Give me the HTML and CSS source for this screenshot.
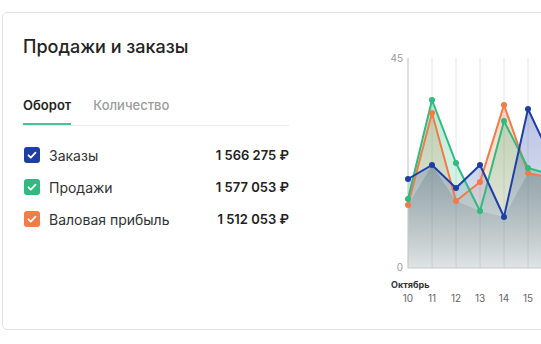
FILE: index.html
```html
<!DOCTYPE html>
<html lang="ru">
<head>
  <meta charset="UTF-8">
  <meta name="viewport" content="width=device-width, initial-scale=1.0">
  <title>Продажи и заказы</title>
  <link rel="stylesheet" href="styles.css">
</head>
<body>
  <div class="card">
    <div class="summary">
      <h2 class="title">Продажи и заказы</h2>

      <div class="tabs">
        <span class="tab active">Оборот</span>
        <span class="tab">Количество</span>
      </div>

      <ul class="legend">
        <li class="legend-row">
          <span class="check blue"><svg viewBox="0 0 16 16"><path d="M4.5 8.3l2.3 2.3 4.7-5"/></svg></span>
          <span class="legend-name">Заказы</span>
          <span class="legend-value">1 566 275 ₽</span>
        </li>
        <li class="legend-row">
          <span class="check green"><svg viewBox="0 0 16 16"><path d="M4.5 8.3l2.3 2.3 4.7-5"/></svg></span>
          <span class="legend-name">Продажи</span>
          <span class="legend-value">1 577 053 ₽</span>
        </li>
        <li class="legend-row">
          <span class="check orange"><svg viewBox="0 0 16 16"><path d="M4.5 8.3l2.3 2.3 4.7-5"/></svg></span>
          <span class="legend-name">Валовая прибыль</span>
          <span class="legend-value">1 512 053 ₽</span>
        </li>
      </ul>
    </div>

    <div class="chart">
      <svg width="300" height="260" viewBox="380 50 300 260">
        <defs>
          <linearGradient id="g-blue" x1="0" y1="0" x2="0" y2="1">
            <stop offset="0" stop-color="#1f3fa6" stop-opacity="0.32"/>
            <stop offset="1" stop-color="#1f3fa6" stop-opacity="0.06"/>
          </linearGradient>
          <linearGradient id="g-green" x1="0" y1="0" x2="0" y2="1">
            <stop offset="0" stop-color="#2dbb7f" stop-opacity="0.32"/>
            <stop offset="1" stop-color="#2dbb7f" stop-opacity="0.06"/>
          </linearGradient>
          <linearGradient id="g-orange" x1="0" y1="0" x2="0" y2="1">
            <stop offset="0" stop-color="#f47a45" stop-opacity="0.3"/>
            <stop offset="1" stop-color="#f47a45" stop-opacity="0.06"/>
          </linearGradient>
          <linearGradient id="g-shade" x1="0" y1="0" x2="0" y2="1">
            <stop offset="0" stop-color="#5f7378" stop-opacity="0.32"/>
            <stop offset="1" stop-color="#5f7378" stop-opacity="0.04"/>
          </linearGradient>
        </defs>

        <g class="grid">
          <line x1="431" y1="58" x2="431" y2="268"/>
          <line x1="455" y1="58" x2="455" y2="268"/>
          <line x1="479" y1="58" x2="479" y2="268"/>
          <line x1="503" y1="58" x2="503" y2="268"/>
          <line x1="527" y1="58" x2="527" y2="268"/>
          <line x1="551" y1="58" x2="551" y2="268"/>
        </g>

        <polygon fill="url(#g-shade)" points="407,205 431,165 455,201 479,211 503,217 527,173 551,178 551,268 407,268"/>
        <polygon fill="url(#g-orange)" points="407,205 431,113 455,201 479,182 503,105 527,173 551,178 551,268 407,268"/>
        <polygon fill="url(#g-green)" points="407,199 431,100 455,163 479,211 503,121 527,168 551,175 551,268 407,268"/>
        <polygon fill="url(#g-blue)" points="407,179 431,165 455,188 479,165 503,217 527,109 551,160 551,268 407,268"/>

        <line class="axis" x1="407" y1="58" x2="407" y2="268"/>
        <line class="axis" x1="407" y1="268" x2="560" y2="268"/>

        <polyline class="series orange" points="407,205 431,113 455,201 479,182 503,105 527,173 551,178"/>
        <polyline class="series green" points="407,199 431,100 455,163 479,211 503,121 527,168 551,175"/>
        <polyline class="series blue" points="407,179 431,165 455,188 479,165 503,217 527,109 551,160"/>

        <g class="dots orange">
          <circle cx="407" cy="205" r="3"/><circle cx="431" cy="113" r="3"/><circle cx="455" cy="201" r="3"/>
          <circle cx="479" cy="182" r="3"/><circle cx="503" cy="105" r="3"/><circle cx="527" cy="173" r="3"/>
        </g>
        <g class="dots green">
          <circle cx="407" cy="199" r="3"/><circle cx="431" cy="100" r="3"/><circle cx="455" cy="163" r="3"/>
          <circle cx="479" cy="211" r="3"/><circle cx="503" cy="121" r="3"/><circle cx="527" cy="168" r="3"/>
        </g>
        <g class="dots blue">
          <circle cx="407" cy="179" r="3"/><circle cx="431" cy="165" r="3"/><circle cx="455" cy="188" r="3"/>
          <circle cx="479" cy="165" r="3"/><circle cx="503" cy="217" r="3"/><circle cx="527" cy="109" r="3"/>
        </g>

        <text class="y-label" x="402" y="62" text-anchor="end">45</text>
        <text class="y-label" x="402" y="271" text-anchor="end">0</text>
        <text class="month" x="390" y="288">Октябрь</text>
        <g class="x-label" text-anchor="middle">
          <text x="407" y="302">10</text>
          <text x="431" y="302">11</text>
          <text x="455" y="302">12</text>
          <text x="479" y="302">13</text>
          <text x="503" y="302">14</text>
          <text x="527" y="302">15</text>
        </g>
      </svg>
    </div>
  </div>
</body>
</html>
```

FILE: styles.css
```css
body {
  margin: 0;
  padding: 12px 0 0 2px;
  font-family: Inter, "Noto Sans", sans-serif;
  color: #222;
  background: #fff;
  overflow: hidden;
}

.card {
  display: flex;
  width: 700px;
  height: 318px;
  box-sizing: border-box;
  border: 1px solid #e3e3e3;
  border-radius: 5px;
  padding: 0 0 0 20px;
}

.summary {
  width: 266px;
  padding-top: 22px;
}

.title {
  margin: 0;
  font-size: 18px;
  line-height: 24px;
  font-weight: 500;
  color: #232323;
}

.tabs {
  display: flex;
  gap: 22px;
  margin-top: 37px;
  border-bottom: 1px solid #ececec;
}

.tab {
  font-size: 13px;
  line-height: 18px;
  font-weight: 500;
  color: #9c9c9c;
  padding-bottom: 11px;
}

.tab.active {
  color: #222;
  font-weight: 600;
  box-shadow: inset 0 -2px 0 #48c39b;
}

.legend {
  list-style: none;
  margin: 13px 0 0;
  padding: 0;
}

.legend-row {
  display: flex;
  align-items: center;
  height: 32px;
}

.check {
  width: 16px;
  height: 16px;
  border-radius: 3px;
  margin-left: 1px;
  margin-right: 9px;
  display: flex;
}

.check svg {
  width: 16px;
  height: 16px;
  fill: none;
  stroke: #fff;
  stroke-width: 1.8;
  stroke-linecap: round;
  stroke-linejoin: round;
}

.check.blue { background: #1d3fa5; }
.check.green { background: #2dbb7f; }
.check.orange { background: #f67c45; }

.legend-name {
  flex: 1;
  font-size: 14px;
  color: #333;
}

.legend-value {
  font-size: 13px;
  font-weight: 600;
  color: #222;
}

.chart {
  margin-left: 92px;
  margin-top: 37px;
}

.chart svg {
  display: block;
  font-family: Inter, "Noto Sans", sans-serif;
}

.grid line {
  stroke: #e6e6e6;
  stroke-width: 1;
}

.axis {
  stroke: #c8c8c8;
  stroke-width: 1.2;
}

.series {
  fill: none;
  stroke-width: 2;
  stroke-linejoin: round;
}

.series.blue { stroke: #1d3fa5; }
.series.green { stroke: #2dbb7f; }
.series.orange { stroke: #f47a45; }

.dots.blue { fill: #1d3fa5; }
.dots.green { fill: #2dbb7f; }
.dots.orange { fill: #f47a45; }

.y-label {
  font-size: 10px;
  fill: #9a9a9a;
}

.month {
  font-size: 9px;
  font-weight: 700;
  fill: #333;
}

.x-label text {
  font-size: 10px;
  fill: #666;
}
```
